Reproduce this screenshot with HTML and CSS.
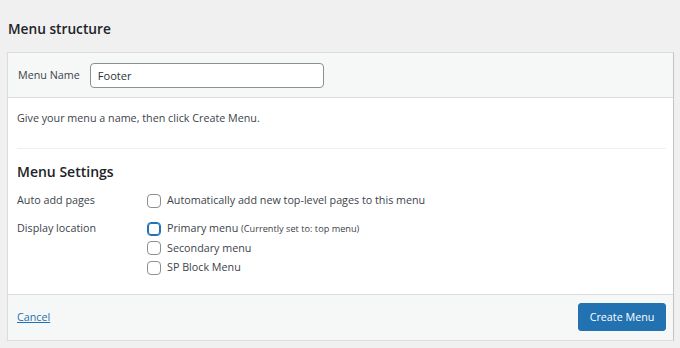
FILE: index.html
```html
<!DOCTYPE html>
<html lang="en">
<head>
<meta charset="utf-8">
<title>Menu structure</title>
<link rel="stylesheet" href="styles.css">
</head>
<body>
<div class="wrap">
  <h2 class="title">Menu structure</h2>
  <div class="panel">
    <div class="panel-header">
      <label class="name-label" for="menu-name">Menu Name</label>
      <input class="name-input" id="menu-name" type="text" value="Footer">
    </div>
    <div class="panel-body">
      <p class="intro">Give your menu a name, then click Create Menu.</p>
      <div class="settings">
        <h3 class="settings-title">Menu Settings</h3>
        <div class="row">
          <div class="row-label">Auto add pages</div>
          <div class="row-options">
            <label class="opt"><input type="checkbox" class="cb"><span>Automatically add new top-level pages to this menu</span></label>
          </div>
        </div>
        <div class="row row-locations">
          <div class="row-label">Display location</div>
          <div class="row-options">
            <label class="opt"><input type="checkbox" class="cb cb-focus"><span>Primary menu <small class="note">(Currently set to: top menu)</small></span></label>
            <label class="opt"><input type="checkbox" class="cb"><span>Secondary menu</span></label>
            <label class="opt"><input type="checkbox" class="cb"><span>SP Block Menu</span></label>
          </div>
        </div>
      </div>
    </div>
    <div class="panel-footer">
      <a class="cancel" href="#">Cancel</a>
      <button class="btn-primary" type="button">Create Menu</button>
    </div>
  </div>
</div>
</body>
</html>
```
FILE: styles.css
```css
html, body {
  margin: 0;
  padding: 0;
  background: #f0f0f1;
}
body {
  font-family: "Open Sans", "Noto Sans", sans-serif;
  font-size: 10.75px;
  color: #3c434a;
}
.wrap {
  padding: 0 6px 0 7px;
}
.title {
  margin: 0;
  padding: 19px 0 0 1px;
  height: 52px;
  box-sizing: border-box;
  font-size: 13.7px;
  font-weight: 600;
  line-height: 20px;
  color: #1d2327;
}
.panel {
  border: 1px solid #dcdcde;
  border-right-color: #c3c4c7;
  background: #fff;
  box-shadow: 0 1px 1px rgba(0,0,0,.04);
}
.panel-header {
  display: flex;
  align-items: center;
  gap: 10px;
  height: 44px;
  padding: 0 10px;
  background: #f6f7f7;
  border-bottom: 1px solid #dcdcde;
}
.name-label {
  color: #3c434a;
}
.name-input {
  box-sizing: border-box;
  width: 234px;
  height: 25px;
  margin: 1px 0 0;
  padding: 0 7px;
  border: 1px solid #8c8f94;
  border-radius: 4px;
  background: #fff;
  font-family: inherit;
  font-size: 11.1px;
  color: #2c3338;
}
.panel-body {
  padding: 11px 7px 16px 9px;
}
.intro {
  margin: 0;
  line-height: 18px;
  color: #3c434a;
}
.settings {
  margin-top: 21px;
  border-top: 1px solid #f0f0f1;
}
.settings-title {
  margin: 13px 0 9px;
  font-size: 14px;
  font-weight: 600;
  line-height: 20px;
  color: #1d2327;
}
.row {
  display: flex;
}
.row-locations {
  margin-top: 8.5px;
}
.row-label {
  width: 130px;
  flex: none;
  line-height: 19.5px;
}
.row-options {
  display: flex;
  flex-direction: column;
}
.opt {
  display: flex;
  align-items: center;
  gap: 6px;
  line-height: 19.5px;
  color: #3c434a;
}
.cb {
  appearance: none;
  -webkit-appearance: none;
  box-sizing: border-box;
  width: 14px;
  height: 14px;
  margin: 0;
  border: 1px solid #8c8f94;
  border-radius: 4px;
  background: #fff;
  flex: none;
}
.cb-focus {
  border-color: #2271b1;
  box-shadow: inset 0 0 0 1px #2271b1;
}
.note {
  font-size: 9.2px;
}
.panel-footer {
  display: flex;
  align-items: center;
  justify-content: space-between;
  height: 45px;
  padding: 0 7px 0 9px;
  background: #f6f7f7;
  border-top: 1px solid #dcdcde;
}
.cancel {
  color: #2271b1;
  text-decoration: underline;
}
.btn-primary {
  box-sizing: border-box;
  height: 28px;
  width: 88px;
  padding: 0;
  border: 1px solid #2271b1;
  border-radius: 3px;
  background: #2271b1;
  color: #fff;
  font-family: inherit;
  font-size: 10.75px;
  line-height: 26px;
}
```
